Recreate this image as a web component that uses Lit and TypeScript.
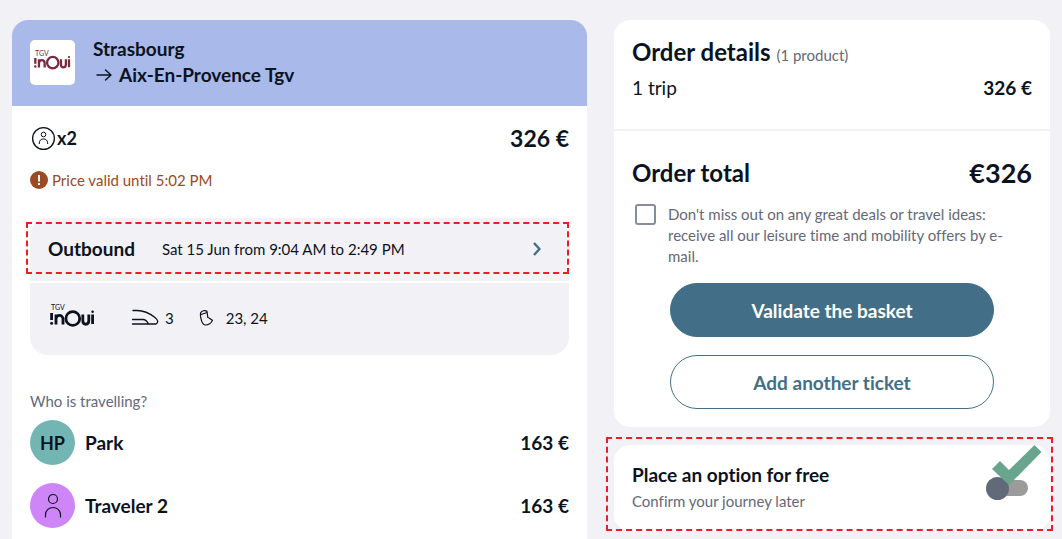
import { LitElement, html, css, svg } from "lit";
import { customElement, property, state } from "lit/decorators.js";

const inouiLetters = svg`
  <g fill="none" stroke="currentColor" stroke-width="2.8">
    <path d="M1.600 5v7M6 16.500V6.500M6 11.500c0-5.500 7-5.500 7 0v5M32.800 6.500v6c0 5 6 5 6 0v-6M42.600 6.500v9.500"/>
    <circle cx="22.800" cy="10.500" r="6.900"/>
  </g>
  <circle cx="1.600" cy="15.200" r="1.500" fill="currentColor"/>
  <circle cx="42.600" cy="3.800" r="1.300" fill="currentColor"/>
`;

@customElement("inoui-logo")
export class InouiLogo extends LitElement {
  static styles = css`
    :host { display: block; width: 45px; position: relative; }
    .tgv { position: absolute; left: 1px; top: -5px; font-size: 7px; line-height: 8px; }
    .mark { display: block; width: 100%; }
  `;
  render() {
    return html`<span class="tgv">TGV</span>
      <svg class="mark" viewBox="0 0 45 20" aria-hidden="true">${inouiLetters}</svg>`;
  }
}

interface Traveller {
  name: string;
  initials: string;
  price: string;
  tone: string;
}

@customElement("trip-card")
export class TripCard extends LitElement {
  @property({ attribute: false }) travellers: Traveller[] = [];

  static styles = css`
    :host { display: block; background: #fff; border-radius: 16px 16px 0 0; overflow: hidden; }
    h2, p { margin: 0; }
    .head { display: flex; align-items: center; gap: 18px; padding: 16px 18px 18px; background: #a9b9e9; }
    .tile { width: 45px; height: 45px; box-sizing: border-box; display: grid; place-items: center;
      border-radius: 5px; background: #fff; color: #7b2a40; }
    .tile inoui-logo { width: 37px; }
    .route { font-size: 19px; line-height: 26px; font-weight: 700; }
    .dest { display: flex; align-items: center; gap: 6px; padding-left: 3px; }
    .body { padding: 18px; }
    .row { display: flex; align-items: center; justify-content: space-between; }
    .pax { display: flex; align-items: center; gap: 1px; padding-left: 1px; font-size: 18px; font-weight: 700; }
    .total { font-size: 23px; line-height: 28px; font-weight: 700; }
    .valid { display: flex; align-items: center; gap: 4px; margin-top: 18px; font-size: 15px; line-height: 20px; color: #9a4a24; }
    .leg { display: flex; flex-direction: column; gap: 2px; margin-top: 28px; border-radius: 18px; overflow: hidden; }
    .wrap { position: relative; }
    .mark { position: absolute; top: 4px; left: -4px; right: 0; height: 52px; box-sizing: border-box;
      border: 2px dashed #ee1c25; pointer-events: none; }
    .outbound { display: flex; align-items: center; width: 100%; height: 63px; padding: 0 26px 2px 18px;
      border: 0; background: #f2f1f6; color: inherit; font: inherit; text-align: left; }
    .label { font-size: 19px; font-weight: 700; }
    .when { flex: 1; padding-left: 27px; font-size: 15px; }
    .info { display: flex; align-items: center; height: 70px; padding: 0 20px 2px; background: #f2f1f6; font-size: 15px; }
    .coach { display: flex; align-items: center; gap: 6px; padding-left: 36px; }
    .seat { display: flex; align-items: center; gap: 10px; padding-left: 24px; }
    .who { margin-top: 36px; font-size: 15px; line-height: 20px; color: #646978; }
    .list { list-style: none; margin: 9px 0 0; padding: 0; display: grid; gap: 18px; }
    .person { display: flex; align-items: center; gap: 10px; font-size: 19px; font-weight: 700; }
    .avatar { width: 45px; height: 45px; border-radius: 50%; display: grid; place-items: center; font-size: 18px; }
    .teal { background: #72b5b2; }
    .violet { background: #cd85f8; }
    .amount { margin-left: auto; }
    svg { display: block; }
  `;

  render() {
    return html`
      <header class="head">
        <div class="tile"><inoui-logo></inoui-logo></div>
        <h2 class="route">
          <div>Strasbourg</div>
          <div class="dest">
            <svg width="17" height="16" fill="none" stroke="#0c131f" stroke-width="1.400" stroke-linecap="round" stroke-linejoin="round" aria-hidden="true"><path d="M1 8h14M9.500 3l5.500 5-5.500 5"/></svg>
            Aix-En-Provence Tgv
          </div>
        </h2>
      </header>
      <div class="body">
        <div class="row">
          <div class="pax">
            <svg width="25" height="25" fill="none" stroke="#0c131f" aria-hidden="true"><circle cx="12.500" cy="12.500" r="10.900" stroke-width="1.300"/><circle cx="12.500" cy="8.500" r="2.300"/><path d="M8.300 18v-1c0-5.500 8.400-5.500 8.400 0v1"/></svg>
            x2
          </div>
          <div class="total">326 €</div>
        </div>
        <p class="valid">
          <svg width="18" height="18" aria-hidden="true"><circle cx="9" cy="9" r="9" fill="#9a4a24"/><path d="M9 4v6.500M9 12v2" stroke="#fff" stroke-width="2"/></svg>
          Price valid until 5:02 PM
        </p>
        <div class="wrap">
          <div class="leg">
            <button class="outbound" type="button">
              <span class="label">Outbound</span>
              <span class="when">Sat 15 Jun from 9:04 AM to 2:49 PM</span>
              <svg width="12" height="16" fill="none" stroke="#426f87" stroke-width="2.400" stroke-linejoin="round" aria-hidden="true"><path d="M3 2l5.500 6L3 14"/></svg>
            </button>
            <div class="info">
              <inoui-logo></inoui-logo>
              <div class="coach">
                <svg width="28" height="18" fill="none" stroke="#0c131f" stroke-width="1.300" stroke-linecap="round" aria-hidden="true"><path d="M2 1.500h4c7 0 13 3 18 7 3.500 3 3.500 5 1 6.500H1.500M1.500 10.500h10.500c2.500 0 4 1.500 5.500 4.500M1.500 15h11.500"/></svg>
                3
              </div>
              <div class="seat">
                <svg width="18" height="18" fill="none" stroke="#0c131f" stroke-width="1.200" stroke-linejoin="round" aria-hidden="true"><path d="M2.500 4C3.500 1.800 7 .8 9 2.300L9.800 8.500c1.500 0 2 1.500 4.700 2.800-1 2.500-4 4.900-7.500 4.700C3.500 15.500 2 7 2.500 4zM3 5.500l6-2"/></svg>
                23, 24
              </div>
            </div>
          </div>
          <div class="mark"></div>
        </div>
        <p class="who">Who is travelling?</p>
        <ul class="list">
          ${this.travellers.map(
            (t) => html`<li class="person">
              <span class="avatar ${t.tone}">${t.initials ||
                html`<svg width="20" height="26" fill="none" stroke="#0c131f" stroke-width="1.200" stroke-linecap="round" aria-hidden="true"><circle cx="10" cy="6" r="4.500"/><path d="M2.500 24v-2c0-10 15-10 15 0v2"/></svg>`}</span>
              <span>${t.name}</span>
              <span class="amount">${t.price}</span>
            </li>`
          )}
        </ul>
      </div>
    `;
  }
}

@customElement("order-card")
export class OrderCard extends LitElement {
  static styles = css`
    :host { display: block; background: #fff; border-radius: 16px; }
    h2, p { margin: 0; }
    .part { padding: 18px; }
    .part + .part { border-top: 2px solid #f2f1f6; padding-top: 25px; }
    .title { font-size: 24px; line-height: 28px; font-weight: 700; }
    .count { font-size: 15px; font-weight: 400; color: #646978; }
    .row { display: flex; align-items: center; justify-content: space-between; }
    .trip { margin: 5px 0 9px; font-size: 19px; line-height: 28px; }
    .strong { font-weight: 700; }
    .grand { font-size: 27px; line-height: 34px; font-weight: 700; }
    .news { display: flex; align-items: flex-start; gap: 12px; margin-top: 14px; padding-left: 3px;
      font-size: 15px; line-height: 21px; color: #646978; }
    .box { appearance: none; flex: none; width: 21px; height: 21px; margin: 0; background: #fff;
      border: 2px solid #878d9c; border-radius: 3px; }
    .box:checked { background: #426f87; }
    .copy { padding-right: 20px; }
    .actions { display: grid; gap: 18px; padding: 16px 38px 0; }
    .btn { height: 54px; border: 1px solid #426f87; border-radius: 27px; background: #fff; color: #426f87;
      font: inherit; font-size: 19px; font-weight: 700; }
    .primary { background: #426f87; color: #fff; }
  `;
  render() {
    return html`
      <section class="part">
        <h2 class="title">Order details <span class="count">(1 product)</span></h2>
        <div class="row trip"><span>1 trip</span><span class="strong">326 €</span></div>
      </section>
      <section class="part">
        <div class="row"><h2 class="title">Order total</h2><span class="grand">€326</span></div>
        <div class="news">
          <input class="box" type="checkbox" id="news" />
          <label class="copy" for="news">Don't miss out on any great deals or travel ideas: receive all our leisure time and mobility offers by e-mail.</label>
        </div>
        <div class="actions">
          <button class="btn primary" type="button">Validate the basket</button>
          <button class="btn" type="button">Add another ticket</button>
        </div>
      </section>
    `;
  }
}

@customElement("option-card")
export class OptionCard extends LitElement {
  @state() private on = false;

  static styles = css`
    :host { display: block; position: relative; }
    p { margin: 0; }
    .card { display: flex; align-items: center; justify-content: space-between; padding: 17px 22px 17px 18px;
      background: #fff; border-radius: 16px; }
    .name { display: block; font-size: 19px; line-height: 26px; font-weight: 700; }
    .hint { font-size: 15px; line-height: 26px; color: #646978; }
    .switch { appearance: none; display: flex; align-items: center; width: 42px; height: 23px; margin: 0; position: relative; }
    .switch::before { content: ""; width: 34px; height: 16px; margin-left: 8px; border-radius: 8px; background: #9b9b9b; }
    .switch::after { content: ""; position: absolute; left: 0; top: 0; width: 23px; height: 23px; border-radius: 50%; background: #626a79; }
    .switch:checked::after { left: 19px; }
    .tick { position: absolute; right: 8px; top: 0; pointer-events: none; }
    .mark { position: absolute; inset: -8px -3px 0 -8px; border: 2px dashed #ee1c25; pointer-events: none; }
  `;
  render() {
    return html`
      <div class="card">
        <div>
          <label class="name" for="option">Place an option for free</label>
          <p class="hint">Confirm your journey later</p>
        </div>
        <input class="switch" id="option" type="checkbox" role="switch" .checked=${this.on}
          @change=${(e: Event) => (this.on = (e.target as HTMLInputElement).checked)} />
      </div>
      <svg class="tick" width="51" height="41" aria-hidden="true"><path d="M1 24l8-8 9 9L43.500 0l7 7L18 40z" fill="#69a48f"/></svg>
      <div class="mark"></div>
    `;
  }
}

@customElement("app-root")
export class AppRoot extends LitElement {
  private travellers: Traveller[] = [
    { name: "Park", initials: "HP", price: "163 €", tone: "teal" },
    { name: "Traveler 2", initials: "", price: "163 €", tone: "violet" },
  ];

  static styles = css`
    :host { display: block; background: #f2f1f6; color: #0c131f; font-family: Lato, "Liberation Sans", sans-serif;
      font-variant-ligatures: none; }
    .page { display: grid; grid-template-columns: 575fr 436fr; gap: 27px; box-sizing: border-box;
      min-height: 100vh; padding: 20px 12px 0; }
    .side { display: flex; flex-direction: column; gap: 18px; }
  `;
  render() {
    return html`
      <main class="page">
        <trip-card .travellers=${this.travellers}></trip-card>
        <aside class="side">
          <order-card></order-card>
          <option-card></option-card>
        </aside>
      </main>
    `;
  }
}
